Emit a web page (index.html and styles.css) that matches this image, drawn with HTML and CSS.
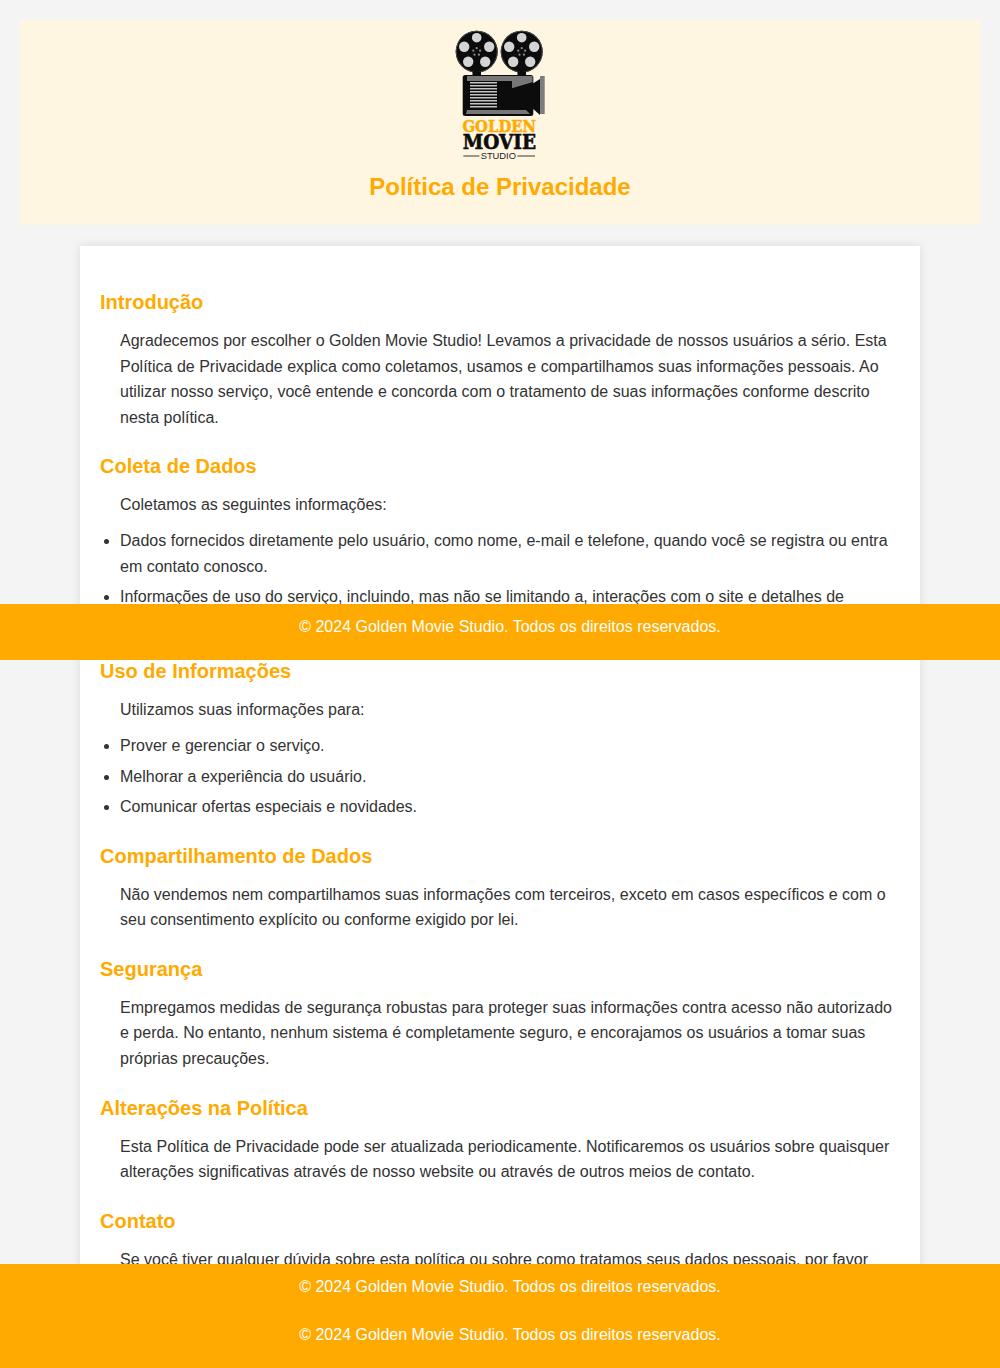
FILE: index.html
```html
<!DOCTYPE html>
<html lang="pt-BR">
<head>
<meta charset="utf-8">
<title>Política de Privacidade</title>
<link rel="stylesheet" href="styles.css">
</head>
<body>
<header class="site-header">
  <svg class="logo" viewBox="15 8 90 134" role="img" aria-label="Golden Movie Studio">
    <defs>
      <g id="reel">
        <circle r="21" fill="#0c0c0c"/>
        <circle r="20.500" fill="none" stroke="#4a4a4a" stroke-width="1"/>
        <g fill="#d4d4d4">
          <circle cx="0" cy="-14" r="4.800"/>
          <circle cx="12.500" cy="-5" r="5.200"/>
          <circle cx="8.500" cy="10" r="5.200"/>
          <circle cx="-8.500" cy="10" r="5.200"/>
          <circle cx="-12.500" cy="-5" r="5.200"/>
        </g>
        <g fill="#8c8c8c">
          <circle cx="0" cy="-3.500" r="1.100"/>
          <circle cx="3.400" cy="-1" r="1.100"/>
          <circle cx="-3.400" cy="-1" r="1.100"/>
          <circle cx="2.200" cy="3" r="1.100"/>
          <circle cx="-2.200" cy="3" r="1.100"/>
        </g>
      </g>
    </defs>
    <use href="#reel" x="36.700" y="31.700"/>
    <use href="#reel" x="81.700" y="31.700"/>
    <path d="M34.500 40h4.500v11.500h2v4h-8.500v-4h2zM79.500 40h4.500v11.500h2v4h-8.500v-4h2z" fill="#0c0c0c"/>
    <rect x="22.700" y="55" width="70.600" height="41" rx="2.500" fill="#0c0c0c"/>
    <path d="M27 56H92.500V63L74 68H72V61H27z" fill="#777"/>
    <path d="M27 90H86L90 94H26z" fill="#777"/>
    <path d="M73 68 93 62V90L73 87z" fill="#0c0c0c"/>
    <path d="M92 64 100 59V95L92 88z" fill="#0c0c0c"/>
    <rect x="100" y="56" width="4.700" height="38" fill="#7d7d7d"/>
    <g fill="#c4c4c4">
      <rect x="30" y="62" width="27" height="1.500"/>
      <rect x="30" y="65" width="27" height="1.500"/>
      <rect x="30" y="68" width="27" height="1.500"/>
      <rect x="30" y="71" width="27" height="1.500"/>
      <rect x="30" y="74" width="27" height="1.500"/>
      <rect x="30" y="77" width="27" height="1.500"/>
      <rect x="30" y="80" width="27" height="1.500"/>
      <rect x="30" y="83" width="27" height="1.500"/>
      <rect x="30" y="86" width="27" height="1.500"/>
    </g>
    <text class="logo-golden" x="22.500" y="112" textLength="73.500" lengthAdjust="spacingAndGlyphs">GOLDEN</text>
    <text class="logo-movie" x="22.700" y="129.300" textLength="73.300" lengthAdjust="spacingAndGlyphs">MOVIE</text>
    <text class="logo-studio" x="40.700" y="139.300" textLength="35.300" lengthAdjust="spacingAndGlyphs">STUDIO</text>
    <path d="M23.300 136H39.300M77.300 136H95" stroke="#222" stroke-width="0.900"/>
  </svg>
  <h1>Política de Privacidade</h1>
</header>

<main class="content">
  <h2>Introdução</h2>
  <p>Agradecemos por escolher o Golden Movie Studio! Levamos a privacidade de nossos usuários a sério. Esta Política de Privacidade explica como coletamos, usamos e compartilhamos suas informações pessoais. Ao utilizar nosso serviço, você entende e concorda com o tratamento de suas informações conforme descrito nesta política.</p>

  <h2>Coleta de Dados</h2>
  <p>Coletamos as seguintes informações:</p>
  <ul>
    <li>Dados fornecidos diretamente pelo usuário, como nome, e-mail e telefone, quando você se registra ou entra em contato conosco.</li>
    <li>Informações de uso do serviço, incluindo, mas não se limitando a, interações com o site e detalhes de navegação.</li>
  </ul>

  <h2>Uso de Informações</h2>
  <p>Utilizamos suas informações para:</p>
  <ul>
    <li>Prover e gerenciar o serviço.</li>
    <li>Melhorar a experiência do usuário.</li>
    <li>Comunicar ofertas especiais e novidades.</li>
  </ul>

  <h2>Compartilhamento de Dados</h2>
  <p>Não vendemos nem compartilhamos suas informações com terceiros, exceto em casos específicos e com o seu consentimento explícito ou conforme exigido por lei.</p>

  <h2>Segurança</h2>
  <p>Empregamos medidas de segurança robustas para proteger suas informações contra acesso não autorizado e perda. No entanto, nenhum sistema é completamente seguro, e encorajamos os usuários a tomar suas próprias precauções.</p>

  <h2>Alterações na Política</h2>
  <p>Esta Política de Privacidade pode ser atualizada periodicamente. Notificaremos os usuários sobre quaisquer alterações significativas através de nosso website ou através de outros meios de contato.</p>

  <h2>Contato</h2>
  <p>Se você tiver qualquer dúvida sobre esta política ou sobre como tratamos seus dados pessoais, por favor</p>
</main>

<footer class="site-footer site-footer-mid">
  <p>© 2024 Golden Movie Studio. Todos os direitos reservados.</p>
</footer>
<footer class="site-footer site-footer-end">
  <p>© 2024 Golden Movie Studio. Todos os direitos reservados.</p>
  <p>© 2024 Golden Movie Studio. Todos os direitos reservados.</p>
</footer>
</body>
</html>
```
FILE: styles.css
```css
html, body {
  margin: 0;
  padding: 0;
}

body {
  background: #f4f4f4;
  color: #333;
  font-family: "Liberation Sans", Arial, sans-serif;
  font-size: 16px;
  line-height: 1.6;
}

.site-header {
  margin: 20px 20px 0;
  padding: 8px 0 19px;
  background: #fff6e2;
  text-align: center;
}

.logo {
  display: block;
  width: 90px;
  height: 134px;
  margin: 0 auto;
}

.logo-golden {
  font-family: "DejaVu Serif", serif;
  font-weight: 700;
  font-size: 17px;
  fill: #ffaa00;
  stroke: #ffaa00;
  stroke-width: 0.5px;
}

.logo-movie {
  font-family: "DejaVu Serif", serif;
  font-weight: 700;
  font-size: 19.6px;
  fill: #0c0c0c;
  stroke: #0c0c0c;
  stroke-width: 0.6px;
}

.logo-studio {
  font-family: "Liberation Sans", sans-serif;
  font-size: 9px;
  fill: #222;
}

h1 {
  margin: 6px 0 0;
  color: #ffaa00;
  font-size: 24px;
  font-weight: 700;
}

.content {
  width: 800px;
  margin: 20.6px auto 0;
  padding: 20px;
  background: #fff;
  box-shadow: 0 0 10px rgba(0, 0, 0, 0.1);
}

h2 {
  margin: 20px 0 10px;
  color: #ffaa00;
  font-size: 20px;
  font-weight: 700;
}

p {
  margin: 0;
  padding-left: 20px;
}

ul {
  margin: 10px 0 0;
  padding-left: 20px;
}

li {
  margin-bottom: 5px;
}

.site-footer {
  left: 0;
  right: 0;
  padding: 10px 0 20px;
  background: #ffaa00;
  color: #fff;
  text-align: center;
}

.site-footer p + p {
  margin-top: 22.4px;
}

.site-footer-mid {
  position: absolute;
  top: 604px;
}

.site-footer-end {
  position: fixed;
  bottom: 0;
}
```
